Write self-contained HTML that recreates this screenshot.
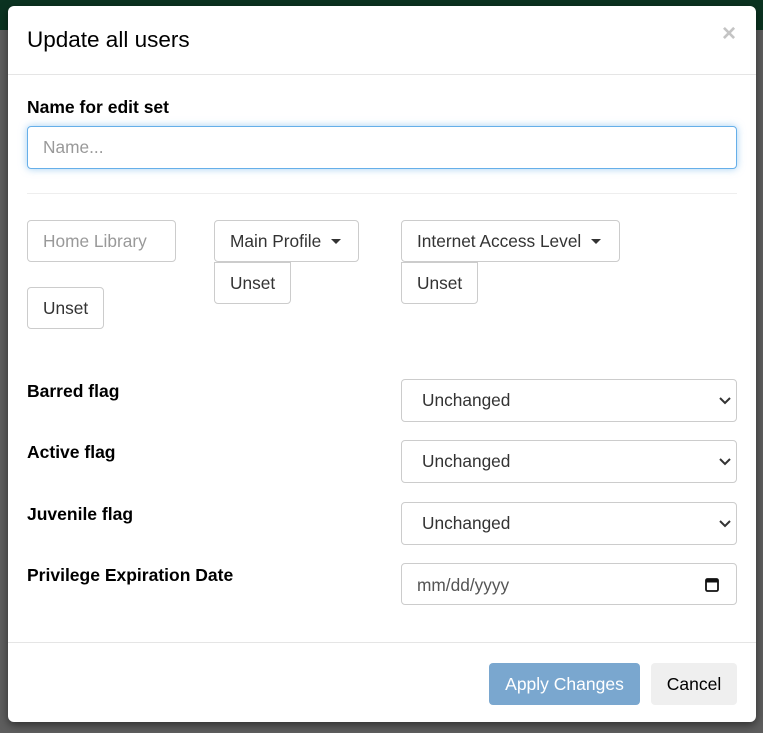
<!DOCTYPE html>
<html><head><meta charset="utf-8"><style>
*{box-sizing:border-box;margin:0;padding:0}
body{width:763px;height:733px;background:#5e5e5e;font-family:"Liberation Sans",Arial,sans-serif;position:relative;overflow:hidden;color:#000}
.top{position:absolute;left:0;top:0;width:763px;height:30px;background:#0b3321}
.modal{position:absolute;left:8px;top:6px;width:748px;height:716px;background:#fff;border-radius:6px;box-shadow:0 3px 9px rgba(0,0,0,.5)}
.a{position:absolute}
.lbl{font-weight:bold;font-size:17.5px}
.box{position:absolute;border:1px solid #ccc;border-radius:4px;background:#fff;font-size:17.3px;color:#333;padding-left:15px;display:flex;align-items:center}
.sel svg{position:absolute;right:4px;top:50%;margin-top:-4px}
.caret{display:inline-block;width:0;height:0;border-left:5px solid transparent;border-right:5px solid transparent;border-top:5px solid #333;margin-left:10px;vertical-align:middle}
</style></head><body>
<div class="top"></div>
<div class="modal">
  <div class="a" style="left:19px;top:21px;font-size:22.5px;color:#000">Update all users</div>
  <div class="a" style="left:714px;top:16px;font-size:24px;font-weight:bold;color:#c4c4c4;line-height:24px">×</div>
  <div class="a" style="left:0;top:68px;width:748px;height:1px;background:#e5e5e5"></div>
  <div class="a lbl" style="left:19px;top:91px">Name for edit set</div>
  <div class="box" style="left:19px;top:120px;width:710px;height:43px;border-color:#66afe9;box-shadow:0 0 8px rgba(102,175,233,.6);color:#999">Name...</div>
  <div class="a" style="left:19px;top:187px;width:710px;height:1px;background:#eee"></div>

  <div class="box" style="left:19px;top:214px;width:149px;height:42px;color:#999">Home Library</div>
  <div class="box" style="left:19px;top:281px;width:77px;height:42px">Unset</div>
  <div class="box" style="left:206px;top:214px;width:145px;height:42px">Main Profile<span class="caret"></span></div>
  <div class="box" style="left:206px;top:256px;width:77px;height:42px;border-radius:0 0 4px 4px">Unset</div>
  <div class="box" style="left:393px;top:214px;width:219px;height:42px">Internet Access Level<span class="caret"></span></div>
  <div class="box" style="left:393px;top:256px;width:77px;height:42px;border-radius:0 0 4px 4px">Unset</div>

  <div class="a lbl" style="left:19px;top:375px">Barred flag</div>
  <div class="box sel" style="left:393px;top:373px;width:336px;height:43px;padding-left:20px">Unchanged<svg width="12" height="8" viewBox="0 0 12 8" style="right:5px"><path d="M1 1l5 5 5-5" stroke="#333" stroke-width="2" fill="none"/></svg></div>
  <div class="a lbl" style="left:19px;top:436px">Active flag</div>
  <div class="box sel" style="left:393px;top:434px;width:336px;height:43px;padding-left:20px">Unchanged<svg width="12" height="8" viewBox="0 0 12 8" style="right:5px"><path d="M1 1l5 5 5-5" stroke="#333" stroke-width="2" fill="none"/></svg></div>
  <div class="a lbl" style="left:19px;top:498px">Juvenile flag</div>
  <div class="box sel" style="left:393px;top:496px;width:336px;height:43px;padding-left:20px">Unchanged<svg width="12" height="8" viewBox="0 0 12 8" style="right:5px"><path d="M1 1l5 5 5-5" stroke="#333" stroke-width="2" fill="none"/></svg></div>
  <div class="a lbl" style="left:19px;top:559px">Privilege Expiration Date</div>
  <div class="box" style="left:393px;top:557px;width:336px;height:42px;color:#555;padding-top:2px">mm/dd/yyyy<svg width="14" height="15" viewBox="0 0 14 15" style="position:absolute;right:17px;top:13px"><rect x="1" y="2" width="12" height="12" rx="1.5" fill="none" stroke="#111" stroke-width="1.8"/><rect x="1" y="2" width="12" height="3.5" fill="#111"/></svg></div>

  <div class="a" style="left:0;top:636px;width:748px;height:1px;background:#e5e5e5"></div>
  <div class="a" style="left:481px;top:657px;width:151px;height:42px;background:#7aa7cf;border-radius:4px;color:#fff;font-size:17.5px;display:flex;align-items:center;justify-content:center">Apply Changes</div>
  <div class="a" style="left:643px;top:657px;width:86px;height:42px;background:#efefef;border-radius:4px;color:#000;font-size:17.5px;display:flex;align-items:center;justify-content:center">Cancel</div>
</div>
</body></html>
